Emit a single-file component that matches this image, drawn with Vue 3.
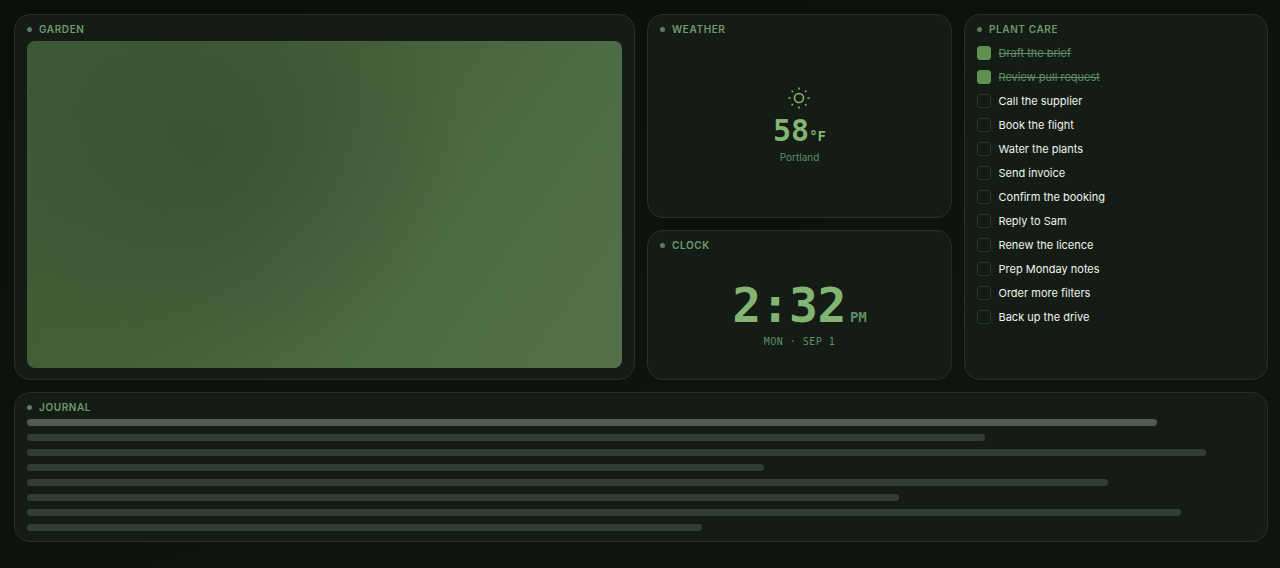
<template>
  <div class="dashboard">
    <section class="card garden">
      <h2 class="card-label"><span class="dot"></span>GARDEN</h2>
      <div class="garden-view"></div>
    </section>

    <div class="middle">
      <section class="card weather">
        <h2 class="card-label"><span class="dot"></span>WEATHER</h2>
        <div class="weather-body">
          <svg class="sun" viewBox="0 0 22 22" fill="none" stroke="currentColor" stroke-width="1.6" stroke-linecap="round">
            <circle cx="11" cy="11" r="4.5" />
            <path d="M11 1v1M11 20v1M1 11h1M20 11h1M4 4l.5.5M17.5 17.5l.5.5M4 18l.5-.5M17.5 4.5l.5-.5" />
          </svg>
          <div class="temp">58<span class="unit">°F</span></div>
          <div class="city">Portland</div>
        </div>
      </section>

      <section class="card clock">
        <h2 class="card-label"><span class="dot"></span>CLOCK</h2>
        <div class="clock-body">
          <div class="time">2:32<span class="ampm">PM</span></div>
          <div class="date">MON · SEP 1</div>
        </div>
      </section>
    </div>

    <section class="card care">
      <h2 class="card-label"><span class="dot"></span>PLANT CARE</h2>
      <ul class="tasks">
        <li v-for="task in tasks" :key="task.name" class="task" :class="{ done: task.done }">
          <span class="box"></span>
          <span class="name">{{ task.name }}</span>
        </li>
      </ul>
    </section>

    <section class="card journal">
      <h2 class="card-label"><span class="dot"></span>JOURNAL</h2>
      <div class="lines">
        <div
          v-for="(w, i) in lines"
          :key="i"
          class="line"
          :class="{ first: i === 0 }"
          :style="{ width: w + '%' }"
        ></div>
      </div>
    </section>
  </div>
</template>

<script setup>
const tasks = [
  { name: 'Draft the brief', done: true },
  { name: 'Review pull request', done: true },
  { name: 'Call the supplier' },
  { name: 'Book the flight' },
  { name: 'Water the plants' },
  { name: 'Send invoice' },
  { name: 'Confirm the booking' },
  { name: 'Reply to Sam' },
  { name: 'Renew the licence' },
  { name: 'Prep Monday notes' },
  { name: 'Order more filters' },
  { name: 'Back up the drive' }
]

const lines = [92, 78, 96, 60, 88, 71, 94, 55]
</script>

<style>
html,
body {
  margin: 0;
  background: #0c120d;
}
</style>

<style scoped>
.dashboard {
  box-sizing: border-box;
  width: 1280px;
  height: 568px;
  padding: 14px 12px 26px 14px;
  display: grid;
  grid-template-columns: 621fr 305fr 304fr;
  grid-template-rows: 366px 150px;
  gap: 12px;
  background: linear-gradient(160deg, #0a0f0a 0%, #0f1610 100%);
  font-family: Inter, "Noto Sans", sans-serif;
  overflow: hidden;
}

.card {
  box-sizing: border-box;
  min-width: 0;
  min-height: 0;
  background: #151c16;
  border: 1px solid #263027;
  border-radius: 16px;
  padding: 8px 12px 11px;
  display: flex;
  flex-direction: column;
}

.journal {
  grid-column: 1 / -1;
}

.card-label {
  margin: 0 0 6px;
  display: flex;
  align-items: center;
  gap: 7px;
  font-size: 10px;
  line-height: 12px;
  font-weight: 600;
  letter-spacing: 0.6px;
  color: #6f9a6c;
}

.dot {
  width: 5px;
  height: 5px;
  border-radius: 50%;
  background: #5f7a63;
}

.garden-view {
  flex: 1;
  border-radius: 8px;
  background:
    radial-gradient(ellipse 260px 230px at 30% 32%, rgba(50, 72, 46, 0.5), rgba(50, 72, 46, 0)),
    linear-gradient(125deg, #3e5a35 0%, #446039 40%, #4d6b45 70%, #537049 100%);
}

.middle {
  display: grid;
  grid-template-rows: 204px 150px;
  gap: 12px;
  min-height: 0;
}

.weather-body,
.clock-body {
  flex: 1;
  display: flex;
  flex-direction: column;
  align-items: center;
  justify-content: center;
}

.weather-body {
  padding-top: 3px;
}

.sun {
  width: 22px;
  height: 22px;
  margin-right: 1px;
  color: #82b571;
}

.temp {
  margin-top: 4px;
  font-family: "DejaVu Sans Mono", monospace;
  font-weight: 700;
  font-size: 30px;
  line-height: 35px;
  color: #82b571;
}

.unit {
  font-size: 14px;
  line-height: 1;
}

.city {
  margin-top: 2px;
  font-size: 10px;
  line-height: 14px;
  color: #5f8f66;
}

.time {
  font-family: "DejaVu Sans Mono", monospace;
  font-weight: 700;
  font-size: 48px;
  line-height: 56px;
  letter-spacing: -0.48px;
  color: #82b571;
}

.ampm {
  margin-left: 4px;
  font-size: 14px;
  line-height: 1;
  letter-spacing: 0;
  color: #5f8f66;
}

.date {
  margin-top: 3px;
  font-family: "DejaVu Sans Mono", monospace;
  font-size: 10px;
  line-height: 12px;
  letter-spacing: 0.5px;
  color: #5f8f66;
}

.tasks {
  list-style: none;
  margin: 0;
  padding: 0;
}

.task {
  height: 24px;
  display: flex;
  align-items: center;
  gap: 7.5px;
  font-size: 11px;
  color: #eef4ea;
}

.box {
  box-sizing: border-box;
  width: 14px;
  height: 14px;
  border: 1px solid #2c372d;
  border-radius: 3px;
}

.task.done .box {
  background: #5e9150;
  border-color: #5e9150;
}

.task.done .name {
  color: #5f8f66;
  text-decoration: line-through;
}

.lines {
  display: flex;
  flex-direction: column;
  gap: 8px;
}

.line {
  height: 7px;
  border-radius: 3px;
  background: #333c34;
}

.line.first {
  background: #505a50;
}
</style>
